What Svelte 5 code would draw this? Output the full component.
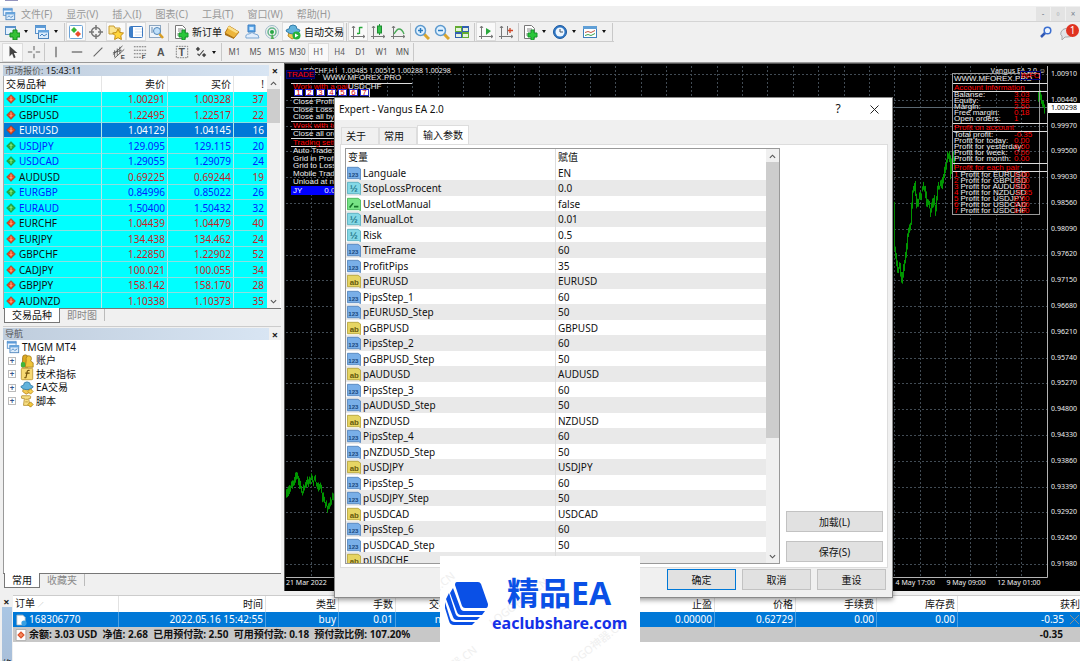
<script>
  const menus = ['文件(F)', '显示(V)', '插入(I)', '图表(C)', '工具(T)', '窗口(W)', '帮助(H)'];

  const tools = [
    { icon: 'newchart', caret: true }, { icon: 'profiles', caret: true }, { sep: true },
    { icon: 'market', on: true }, { icon: 'target' }, { icon: 'star', on: true },
    { icon: 'panel', on: true }, { icon: 'tester' }, { sep: true },
    { icon: 'order', label: '新订单' }, { icon: 'gold' }, { icon: 'cloud' }, { icon: 'signal' },
    { icon: 'auto', label: '自动交易', on: true }, { sep: true },
    { icon: 'bars', on: true }, { icon: 'candle' }, { icon: 'linechart' }, { sep: true },
    { icon: 'zoomin' }, { icon: 'zoomout' }, { icon: 'tile' }, { sep: true },
    { icon: 'scroll', on: true }, { icon: 'shift' }, { sep: true },
    { icon: 'indicator', caret: true }, { icon: 'clock', caret: true }, { icon: 'template', caret: true }, { sep: true }
  ];
  const drawTools = ['cursor', 'cross', 'vline', 'hline', 'trend', 'channel', 'fibo', 'textA', 'textT'];
  const frames = ['M1', 'M5', 'M15', 'M30', 'H1', 'H4', 'D1', 'W1', 'MN'];

  const quotes = [
    ['USDCHF', '1.00291', '1.00328', 37, 'd'], ['GBPUSD', '1.22495', '1.22517', 22, 'd'],
    ['EURUSD', '1.04129', '1.04145', 16, 'd', true], ['USDJPY', '129.095', '129.115', 20, 'u'],
    ['USDCAD', '1.29055', '1.29079', 24, 'u'], ['AUDUSD', '0.69225', '0.69244', 19, 'd'],
    ['EURGBP', '0.84996', '0.85022', 26, 'u'], ['EURAUD', '1.50400', '1.50432', 32, 'u'],
    ['EURCHF', '1.04439', '1.04479', 40, 'd'], ['EURJPY', '134.438', '134.462', 24, 'd'],
    ['GBPCHF', '1.22850', '1.22902', 52, 'd'], ['CADJPY', '100.021', '100.055', 34, 'd'],
    ['GBPJPY', '158.142', '158.170', 28, 'd'], ['AUDNZD', '1.10338', '1.10373', 35, 'd']
  ];
  const tree = [['accounts', '账户'], ['func', '技术指标'], ['expert', 'EA交易'], ['script', '脚本']];

  const params = [
    ['int', 'Languale', 'EN'], ['real', 'StopLossProcent', '0.0'], ['bool', 'UseLotManual', 'false'],
    ['real', 'ManualLot', '0.01'], ['real', 'Risk', '0.5'], ['int', 'TimeFrame', '60'], ['int', 'ProfitPips', '35']
  ];
  ['EURUSD', 'GBPUSD', 'AUDUSD', 'NZDUSD', 'USDJPY', 'USDCAD'].forEach((p, i) => {
    params.push(['str', 'p' + p, p], ['int', `PipsStep_${i + 1}`, '60'], ['int', `p${p}_Step`, '50']);
  });
  params.push(['str', 'pUSDCHF', 'USDCHF']);

  const prices = Array.from({ length: 20 }, (_, i) => (1.0091 - i * 0.0047).toFixed(5));
  const dates = ['21 Mar 2022', ...Array(11).fill(''), '4 May 17:00', '9 May 09:00', '12 May 01:00'];

  const stats = [['Balanse:', '3.03'], ['Equity:', '2.68'], ['Margin:', '2.50'], ['Free margin:', '0.18'], ['Open orders:', '1']];
  const profit = [['Total profit:', '-0.35'], ['Profit for today:', '0.00'], ['Profit for yesterday:', '0.00'], ['Profit for week:', '0.00'], ['Profit for month:', '0.00']];
  const pairs = [['EURUSD', '0.00'], ['GBPUSD', '0.00'], ['AUDUSD', '0.00'], ['NZDUSD', '-0.35'], ['USDJPY', '0.00'], ['USDCAD', '0.00'], ['USDCHF', '0.00']];

  // One vertical bar per pixel between the key points, with a repeatable jitter.
  function bars(points) {
    let d = '', seed = 7;
    const rnd = () => (seed = (seed * 16807) % 2147483647) / 2147483647;
    for (let k = 0; k < points.length - 1; k++) {
      const [x0, y0] = points[k], [x1, y1] = points[k + 1];
      for (let x = x0; x < x1; x++) {
        const a = y0 + ((y1 - y0) * (x - x0)) / (x1 - x0);
        const b = y0 + ((y1 - y0) * (x + 1 - x0)) / (x1 - x0);
        const shift = (rnd() - 0.5) * 5;
        const lo = Math.min(a, b) + shift - rnd() * 4, hi = Math.max(a, b) + shift + 1 + rnd() * 4;
        d += `M${x + 0.5} ${lo.toFixed(1)}V${hi.toFixed(1)}`;
      }
    }
    return d;
  }
  const leftBars = bars([[0, 432], [5, 419], [11, 408], [16, 425], [21, 417], [25, 411], [30, 416], [34, 420], [38, 435], [43, 441], [48, 430]]);
  const midBars = bars([[608, 142], [609, 185], [612, 203], [614, 198], [616, 212], [619, 196], [622, 170], [625, 155], [627, 125], [629, 120], [631, 137], [634, 130], [637, 124], [639, 120], [641, 134], [645, 146], [648, 132], [650, 143], [652, 122], [655, 120], [659, 105], [662, 88], [664, 92], [665, 108], [667, 85], [669, 100]]);
  const endBars = bars([[752, 36], [754, 28], [756, 34], [759, 42]]);
</script>

{#snippet icon(name)}
  <svg class="ic" viewBox="0 0 16 16" fill="none" aria-hidden="true">
    {#if name === 'app' || name === 'profiles' || name === 'account'}
      <rect x="1.500" y="1.500" width="10" height="8" fill="#eaf4ff" stroke="#5b93cb" />
      <path d="M1 2h11v2H1z" fill="#5b9bd8" />
      <rect x="4.500" y="6.500" width="10" height="8" fill="#dcecfb" stroke="#4c83bb" />
      <path d="M4 6h11v2.500H4z" fill="#66a4dd" /><path d="M6 12l2-2 2 2 3-2" stroke="#4684c4" />
    {:else if name === 'newchart'}
      <rect x="1.500" y="2.500" width="10" height="8" fill="#e4f1fd" stroke="#5c8fc2" /><path d="M1 2h11v2H1z" fill="#5b93cb" />
      <path d="M9 6h4v3h3v4h-3v3H9v-3H6V9h3z" fill="#35c135" stroke="#128a1c" />
    {:else if name === 'market'}
      <rect x="1.500" y="1.500" width="13" height="13" rx="1" fill="#fff" stroke="#6ba2d6" />
      <path d="M6 3l3 3-3 3-3-3z" fill="#35b535" /><path d="M10 7l3 3-3 3-3-3z" fill="#ed4b28" />
    {:else if name === 'target'}
      <circle cx="8" cy="8" r="4.500" stroke="#777" stroke-width="1.500" /><path d="M8 1v5M8 10v5M1 8h5M10 8h5" stroke="#777" stroke-width="1.500" />
    {:else if name === 'star'}
      <path d="M1 2h5l1 2h5v6H1z" fill="#fbe590" stroke="#c79b31" /><path d="M10 5l1.700 3.500 3.800.500-2.700 2.700.600 3.800-3.400-1.800-3.400 1.800.600-3.800L4.500 9l3.800-.500z" fill="#ffd53b" stroke="#c28b15" />
    {:else if name === 'panel'}
      <rect x="1.500" y="2.500" width="13" height="11" rx="1" fill="#fff" stroke="#3c78c0" /><path d="M2 3h3v10H2z" fill="#3d7fc9" /><path d="M7 5h7M7 8h7M7 11h7" stroke="#d4e3f5" />
    {:else if name === 'tester'}
      <rect x="1.500" y="1.500" width="11" height="12" fill="#edf4fb" stroke="#8ba5c0" /><path d="M4 3v6M7 4v6" stroke="#688cb1" /><circle cx="9" cy="7" r="3.500" fill="#bfe0fb" stroke="#5688b8" /><path d="M11.500 10l3.500 4" stroke="#d99e23" stroke-width="2.500" />
    {:else if name === 'order' || name === 'indicator'}
      <path d="M2.500 1.500h7l3 3v10h-10z" fill="#fff" stroke="#777" /><path d="M5 5h5M5 7h4M5 9v3" stroke="#888" />
      <path d="M9 6h3v3h3v4h-3v3H9v-3H6V9h3z" fill="#29c739" stroke="#15952b" />
    {:else if name === 'gold'}
      <path d="M5 2l10 6-5 6L1 9z" fill="#edb53b" stroke="#b87a17" /><path d="M5 2l10 6-3 1-9-5z" fill="#fbdf88" /><path d="M1 9l9 5v1L1 11z" fill="#a86e12" />
    {:else if name === 'cloud'}
      <path d="M4 1h7v7H4z" fill="#5ea8e8" stroke="#3b7cc0" /><path d="M5.500 3h4v3h-4z" fill="#cfe8ff" /><path d="M2 14q-1-4 3-4 3-3 6 0 4 0 4 4z" fill="#e2eefc" stroke="#7ba7d3" />
    {:else if name === 'signal'}
      <circle cx="8" cy="8" r="6.500" stroke="#9ebac9" /><circle cx="8" cy="8" r="4" stroke="#64b58b" stroke-width="1.500" /><circle cx="8" cy="8" r="2" fill="#28a745" /><path d="M8 9l2 6H7z" fill="#50af52" />
    {:else if name === 'auto' || name === 'expert'}
      <path d="M4 8l8-1 1 5-6 3-4-3z" fill="#f3c851" stroke="#bd8d27" /><path d="M1 7q0-2 3-2 0-4 4-4t4 4q3 0 3 2-3 3-7 3T1 7z" fill="#62b3dc" stroke="#347da9" />
      {#if name === 'auto'}<circle cx="11.500" cy="11.500" r="4" fill="#26b23b" /><path d="M10 9.500v4l3.500-2z" fill="#fff" />{:else}<path d="M12 9l3 3-3 3-3-3z" fill="#f7d152" stroke="#bb8e1f" />{/if}
    {:else if name === 'bars'}
      <path d="M3.500 2v13M1 12.500h14M2 4l1.500-2L5 4M13 11l2 1.500-2 1.500" stroke="#777" /><path d="M9.500 3v7M9.500 3.500h3M7 9.500h2" stroke="#27a73a" stroke-width="1.300" />
    {:else if name === 'candle'}
      <path d="M3.500 2v13M1 12.500h14M2 4l1.500-2L5 4M13 11l2 1.500-2 1.500" stroke="#777" /><path d="M9.500 0v11" stroke="#27953a" /><rect x="7.500" y="2" width="4" height="7" fill="#35c24a" stroke="#1c8b31" />
    {:else if name === 'linechart'}
      <path d="M3.500 2v13M1 12.500h14M2 4l1.500-2L5 4M13 11l2 1.500-2 1.500" stroke="#777" /><path d="M4 10q3-5 5-5 3 0 5 5" stroke="#48a956" stroke-width="1.300" />
    {:else if name === 'zoomin' || name === 'zoomout'}
      <path d="M10 10l5 5" stroke="#dba52c" stroke-width="3" /><circle cx="6.500" cy="6.500" r="5" fill="#dff1ff" stroke="#5d9ace" stroke-width="1.500" /><path d="M4 6.500h5" stroke="#2879bd" stroke-width="1.500" />
      {#if name === 'zoomin'}<path d="M6.500 4v5" stroke="#2879bd" stroke-width="1.500" />{/if}
    {:else if name === 'tile'}
      <path d="M1 2h7v6H1zM8 8h7v6H8z" fill="#63ac32" /><path d="M8 2h7v6H8zM1 8h7v6H1z" fill="#315fb2" /><path d="M2 4h5v3H2zM9 4h5v3H9zM2 10h5v3H2zM9 10h5v3H9z" fill="#e4f2dd" />
    {:else if name === 'scroll'}
      <path d="M3.500 2v13M1 12.500h14M2 4l1.500-2L5 4M13 11l2 1.500-2 1.500" stroke="#777" /><path d="M8 4l5 3-5 4z" fill="#2aa83c" />
    {:else if name === 'shift'}
      <path d="M3.500 2v13M1 12.500h14M2 4l1.500-2L5 4M13 11l2 1.500-2 1.500M9.500 2v9" stroke="#777" /><path d="M10 6.500h5M12 4v5" stroke="#d14626" stroke-width="1.300" />
    {:else if name === 'clock'}
      <circle cx="8" cy="8" r="6.500" fill="#2f78c7" stroke="#1f5a9e" /><circle cx="8" cy="8" r="4.500" fill="#edf6ff" /><path d="M8 5v3h3" stroke="#456" />
    {:else if name === 'template'}
      <rect x="1.500" y="2.500" width="13" height="11" fill="#fff" stroke="#3f7fbd" /><path d="M1 2h14v3H1z" fill="#609fd6" /><path d="M3 8.500l3-1 3 1 4-2" stroke="#c4543f" /><path d="M3 11.500l3-1 3 1 4-2" stroke="#3da24c" />
    {:else if name === 'cursor'}
      <path d="M4 1v12l3-3 2 5 2-1-2-5h4z" fill="#444" />
    {:else if name === 'cross'}
      <path d="M8 1v5M8 10v5M1 8h5M10 8h5" stroke="#666" stroke-width="1.200" />
    {:else if name === 'vline'}<path d="M8 2v12" stroke="#555" stroke-width="1.300" />
    {:else if name === 'hline'}<path d="M2 8h12" stroke="#555" stroke-width="1.300" />
    {:else if name === 'trend'}<path d="M3 13L13 3" stroke="#666" stroke-width="1.200" />
    {:else if name === 'channel'}
      <path d="M1 11L12 1M3 15L14 5M3 6v8M6 4v8M9 2v8M1 9l10-3" stroke="#555" /><text x="10" y="16" class="mini">E</text>
    {:else if name === 'fibo'}
      <path d="M1 2h14M1 6h14M1 10h14M1 14h8" stroke="#666" stroke-dasharray="2 1" /><text x="10" y="16" class="mini">F</text>
    {:else if name === 'textA'}<text x="3.500" y="13" class="glyph">A</text>
    {:else if name === 'textT'}
      <rect x="1.500" y="1.500" width="13" height="13" stroke="#777" stroke-dasharray="2 1" /><text x="4" y="12.500" class="glyph">T</text>
    {:else if name === 'arrows'}
      <path d="M4.500 2l2.500 2.500L4.500 7 2 4.500z" fill="#444" /><path d="M4 10l2 2 5-6" stroke="#444" stroke-width="1.300" /><path d="M11.500 9l2.500 2.500-2.500 2.500L9 11.500z" fill="#444" />
    {:else if name === 'accounts'}
      <path d="M3 4q0-3 3-3t3 3q0 2-1 3l1 8H2l1-8z" fill="#dda920" stroke="#9d7413" /><path d="M7 5q0-3 3-3t3 3q0 2-1 3l3 2v5H6l1-7z" fill="#f0c53b" stroke="#a9801c" /><rect x="1" y="9" width="5" height="6" rx="2" fill="#40b53c" />
    {:else if name === 'func'}
      <rect x="1.500" y="1.500" width="13" height="13" rx="1" fill="#f7d973" stroke="#c19a36" /><path d="M11 4q-3-1-3 3l-1 4q0 2-2 1M6 7h5" stroke="#70500a" stroke-width="1.300" />
    {:else if name === 'script'}
      <path d="M2 2h9q2 0 1 3h-2l1 8H4L5 5H2q-1-2 0-3z" fill="#f8df83" stroke="#b8953c" /><path d="M12 9l3 3-3 3-3-3z" fill="#f4c93b" stroke="#ac851d" /><path d="M6 6h3M6 9h3" stroke="#b8953c" />
    {:else if name === 'u' || name === 'd'}
      <path d="M8 1l7 7-7 7-7-7z" fill={name === 'u' ? '#2cad3b' : '#e8471f'} stroke={name === 'u' ? '#16792a' : '#93341b'} />
      <path d={name === 'u' ? 'M8 4l3 4H9v4H7V8H5z' : 'M8 12L5 8h2V4h2v4h2z'} fill={name === 'u' ? '#7be27a' : '#ff9b6e'} />
    {:else if name === 'trade'}
      <path d="M2.500 1.500h8l3 3v10h-11z" fill="#fff" stroke="#bbb" /><circle cx="12" cy="12" r="3.500" fill="#38a0e3" />
    {:else if name === 'balance'}
      <rect x="1.500" y=".5" width="13" height="15" rx="1" fill="#fff" stroke="#999" /><path d="M8 3l5 5-5 5-5-5z" fill="#dc4820" /><path d="M8 5v6M5 8h6" stroke="#ffb98d" />
    {:else}
      <path d="M.5 1.500h12l3 2v12l-2-1H.5z" fill={name === 'int' ? '#79afe8' : name === 'real' ? '#85d8e6' : name === 'bool' ? '#77e386' : '#e6d563'} stroke={name === 'int' ? '#5385bd' : name === 'real' ? '#57afbf' : name === 'bool' ? '#43b355' : '#b6a43b'} />
      {#if name === 'bool'}<path d="M3 12l4-5M8 11h5" stroke="#157329" stroke-width="1.800" />
      {:else}<text x={name === 'int' ? 1.5 : 3} y="12" class={['type', name]}>{name === 'int' ? '123' : name === 'real' ? '½' : 'ab'}</text>{/if}
    {/if}
  </svg>
{/snippet}

{#snippet chevron(down)}
  <svg class="chev" viewBox="0 0 8 8" fill="none" aria-hidden="true"><path d={down ? 'M1 2.500l3 3 3-3' : 'M1 5.500l3-3 3 3'} stroke="#555" stroke-width="1.300" /></svg>
{/snippet}

<div class="app">
  <div class="edge"><i></i></div>
  <header class="menubar">
    {@render icon('app')}
    <nav>{#each menus as m}<button>{m}</button>{/each}</nav>
    <div class="winbtns"><button aria-label="-">-</button><button aria-label="▫">▫</button><button aria-label="×">×</button></div>
  </header>

  <div class="toolbar">
    <div class="strip main">
      {#each tools as t}
        {#if t.sep}<i class="sep"></i>
        {:else}
          <button class={['tb', { on: t.on, caret: t.caret }]} aria-label={t.label ?? t.icon}>
            {@render icon(t.icon)}{#if t.label}<span>{t.label}</span>{/if}
          </button>
        {/if}
      {/each}
    </div>
    <div class="right">
      <svg width="12" height="12" viewBox="0 0 12 12" fill="none"><path d="M1 11l4-4" stroke="#3157b4" stroke-width="2.500" /><circle cx="7.500" cy="4.500" r="3.300" fill="#eef5ff" stroke="#3c6fd0" stroke-width="1.500" /></svg>
      <span class="chat">
        <svg width="14" height="12" viewBox="0 0 14 12"><path d="M7 0q6 0 6 4.500T7 9H5l-3 3V8Q0 7 1 4t6-4z" fill="#e3e3e6" stroke="#aaa" /></svg>
        <b>1</b>
      </span>
    </div>
  </div>
  <div class="toolbar second">
    <div class="strip">
      {#each drawTools as d, i}<button class={['tb', { on: i === 0 }]} aria-label={d}>{@render icon(d)}</button>{#if i === 1}<i class="sep"></i>{/if}{/each}
      <button class="tb caret" aria-label="arrows">{@render icon('arrows')}</button><i class="sep wide"></i>
      {#each frames as f}<button class={['tf', { on: f === 'H1' }]}>{f}</button>{/each}<i class="sep"></i>
    </div>
  </div>

  <main class="work">
    <aside class="side">
      <section class="panel">
        <h2><span>市场报价: <b>15:43:11</b></span><button class="x" aria-label="×">×</button></h2>
        <div class="scrollbox">
          <table class="quotes">
            <thead><tr><th>交易品种</th><th>卖价</th><th>买价</th><th>!</th></tr></thead>
            <tbody>
              {#each quotes as [s, bid, ask, sp, dir, sel]}
                <tr class={[dir, { sel }]}><td><div class="cell">{@render icon(dir)}{s}</div></td><td>{bid}</td><td>{ask}</td><td>{sp}</td></tr>
              {/each}
            </tbody>
          </table>
          <div class="sbar">{@render chevron(false)}<i class="thumb q"></i>{@render chevron(true)}</div>
        </div>
        <div class="tabs"><button class="cur">交易品种</button><button>即时图</button></div>
      </section>
      <section class="panel nav">
        <h2><span>导航</span><button class="x" aria-label="×">×</button></h2>
        <ul class="tree">
          <li class="root">{@render icon('account')}TMGM MT4</li>
          {#each tree as [ic, label]}<li><i class="plus">+</i>{@render icon(ic)}{label}</li>{/each}
        </ul>
        <div class="tabs"><button class="cur">常用</button><button>收藏夹</button></div>
      </section>
    </aside>

    <section class="chart">
      <div class="plot">
        <svg class="canvas" viewBox="0 0 762 512" preserveAspectRatio="none" fill="none">
          <g stroke="#414b54" stroke-dasharray="2 2">
            {#each Array(29) as _, i}<path d="M{Math.round(26 + i * 25.36) - 0.5} 0V512" />{/each}
            {#each prices as _, i}<path d="M0 {Math.round(8 + i * 25.79) + 0.5}H762" />{/each}
          </g>
          <path d="M0 41.500H762" stroke="#5b6872" />
          <path d="{leftBars}{midBars}{endBars}" stroke="#009600" />
          <path d="M0 511.500H761.500V0" stroke="#b4b4b4" />
        </svg>
        <div class="ohlc"><i></i>USDCHF,H1&nbsp; 1.00485 1.00515 1.00288 1.00298</div>
        <div class="eaname">Vangus EA 2.0 ☺</div>
        <div class="trade">
          <span class="tag">TRADE</span>
          <p class="site">WWW.MFOREX.PRO</p>
          <p class="rd with">Work with a pair<em>USDCHF</em></p>
          <div class="nums">{#each [1, 2, 3, 4, 5, 6, 7] as n}<button>{n}</button>{/each}</div>
          <div class="grp"><p>Close Profit</p><p>Close Loss:</p><p>Close all by</p></div>
          <p class="rd">Work with total</p>
          <p class="one">Close all orders</p>
          <p class="rd">Trading settings</p>
          <div class="grp"><p>Auto Trade:</p><p>Grid in Profit</p><p>Grid to Loss</p><p>Mobile Trade</p><p>Unload at night</p></div>
          <p class="bar"><span>JY</span><span>0.00</span></p>
        </div>
        <div class="info">
          <span class="tag">INFO</span>
          <p class="site">WWW.MFOREX.PRO</p>
          <p class="rd">Account information</p>
          <div class="grp">{#each stats as [k, v]}<p>{k}<em>{v}</em></p>{/each}</div>
          <p class="rd">Profit on account</p>
          <div class="grp">{#each profit as [k, v]}<p>{k}<em>{v}</em></p>{/each}</div>
          <p class="rd">Profit for each pair</p>
          <div class="grp last">{#each pairs as [k, v], i}<p><b>{i + 1}</b>Profit for {k}<em>{v}</em></p>{/each}</div>
        </div>
      </div>
      <div class="prices">{#each prices as p}<span>{p}</span>{/each}<b class="now">1.00298</b></div>
      <div class="dates">{#each dates as d}<span>{d}</span>{/each}</div>
    </section>

    <section class="dialog" role="dialog" aria-label="Expert - Vangus EA 2.0">
      <div class="title"><span>Expert - Vangus EA 2.0</span><button aria-label="?">?</button>
        <button aria-label="×"><svg width="9" height="9" viewBox="0 0 9 9"><path d="M.5.500l8 8M8.500.500l-8 8" stroke="#222" /></svg></button></div>
      <div class="dtabs"><button>关于</button><button>常用</button><button class="cur">输入参数</button></div>
      <div class="page">
        <div class="listbox">
          <table class="params">
            <thead><tr><th>变量</th><th>赋值</th></tr></thead>
            <tbody>
              {#each params as [t, n, v]}
                <tr><td><div class="cell">{@render icon(t)}{n}</div></td><td>{v}</td></tr>
              {/each}
            </tbody>
          </table>
          <div class="sbar">{@render chevron(false)}<i class="thumb p"></i>{@render chevron(true)}</div>
        </div>
        <div class="sidebtns"><button class="btn">加载(L)</button><button class="btn">保存(S)</button></div>
      </div>
      <div class="actions"><button class="btn def">确定</button><button class="btn">取消</button><button class="btn">重设</button></div>
    </section>
  </main>

  <footer class="terminal">
    <div class="rail"><button class="x" aria-label="×">×</button><div><span>终端</span></div></div>
    <table class="orders">
      <colgroup><col class="c106" /><col class="c147" /><col class="c73" /><col class="c57" /><col class="c76" /><col class="c81" /><col class="c81" /><col class="c81" /><col class="c81" /><col class="c81" /><col class="c81" /><col /></colgroup>
      <thead><tr><th>订单 <small>∕</small></th><th>时间</th><th>类型</th><th>手数</th><th>交易品种</th><th></th><th></th><th>止盈</th><th>价格</th><th>手续费</th><th>库存费</th><th>获利</th></tr></thead>
      <tbody>
        <tr class="sel"><td><div class="cell">{@render icon('trade')}168306770</div></td><td>2022.05.16 15:42:55</td><td>buy</td><td>0.01</td><td>nzdusd</td><td></td><td></td><td>0.00000</td><td>0.62729</td><td>0.00</td><td>0.00</td>
          <td><div class="cell end">-0.35<svg width="11" height="11" viewBox="0 0 11 11"><path d="M1 1l9 9M10 1l-9 9" stroke="#8d8f91" /></svg></div></td></tr>
        <tr class="sum"><td colspan="11"><div class="cell">{@render icon('balance')}<span>余额: 3.03 USD&nbsp; 净值: 2.68&nbsp; 已用预付款: 2.50&nbsp; 可用预付款: 0.18&nbsp; 预付款比例: 107.20%</span></div></td><td class="tot">-0.35</td></tr>
      </tbody>
    </table>
  </footer>

  <div class="brand">
    <span class="wm a">LOGO神器.CN</span><span class="wm b">LOGO神器.CN</span><span class="wm c">LOGO神器.CN</span><span class="wm d">LOGO神器.CN</span>
    <svg width="44" height="44" viewBox="0 0 44 44" fill="#0a50e6">
      <path d="M12 1h21q2 0 3 2l7 20q0 4-2 4H20q-2 0-3-2L10 4q0-3 2-3z" />
      <path d="M8 7l7 19q1 4 4 4h21l-3 4H16q-3 0-4-3L5 12z" />
      <path d="M4 12l6 19q1 5 5 5h20l-3 3H12q-3 0-4-3L1 18z" />
      <path d="M0 21l5 16q1 4 5 4h20l-3 3H9q-4 0-5-4L0 27z" />
    </svg>
    <div class="words"><strong>精品EA</strong><span>eaclubshare.com</span></div>
  </div>
</div>

<style>
  :global(body) { margin: 0; background: #fff; }
  .app { position: relative; height: 100vh; overflow: hidden; display: flex; flex-direction: column; background: #f0f0f0; color: #111; font: 10px/14px "Noto Sans", "Noto Sans CJK SC", sans-serif; }
  .app, .app * { box-sizing: border-box; }
  button { font: inherit; color: inherit; background: none; border: 0; padding: 0; margin: 0; }
  p, h2, ul { margin: 0; padding: 0; }
  table { border-collapse: separate; border-spacing: 0; table-layout: fixed; }
  th, td { padding: 0; font-weight: 400; overflow: hidden; white-space: nowrap; }
  .ic { width: 14px; height: 14px; flex: none; }
  .mini { font: bold 7px "Liberation Sans", sans-serif; fill: #444; }
  .glyph { font: bold 12px "Liberation Sans", sans-serif; fill: #555; }
  .type { font: bold 7px "Liberation Sans", sans-serif; fill: #1b4a80; }
  .type.real { font-size: 11px; fill: #23798a; }
  .type.str { font-size: 9px; fill: #665a0d; }

  .edge { height: 6px; flex: none; background: #fff; padding-left: 5px; }
  .edge i { display: block; width: 13px; height: 1px; background: #9393bd; }
  .menubar { flex: none; height: 16px; display: flex; align-items: center; padding-left: 2px; border-bottom: 1px solid #d4d4d4; color: #999; }
  .menubar nav { display: flex; gap: 14px; padding-left: 5px; flex: 1; }
  .winbtns { display: flex; gap: 1px; }
  .winbtns button { width: 14px; height: 14px; background: #e3e3e3; color: #788490; font-size: 8px; line-height: 12px; }

  .toolbar { flex: none; height: 20px; display: flex; justify-content: space-between; }
  .second { height: 21px; border-bottom: 1px solid #999; }
  .strip { display: flex; align-items: center; padding-left: 2px; }
  .main { border-bottom: 1px solid #ccc; }
  .tb { height: 19px; width: 21px; display: flex; align-items: center; justify-content: center; gap: 3px; flex: none; }
  .main .tb { width: 20px; }
  .main .ic { width: 16px; height: 16px; }
  .main .tb:has(span) { width: auto; padding-left: 3px; }
  .tb.on, .tf.on { background: #f9f9f9; box-shadow: inset 0 0 0 1px #dcdcdc; }
  .main .tb.caret, .tb.caret { width: 30px; justify-content: flex-start; padding-left: 2px; gap: 4px; }
  .second .tb.caret { width: 28px; }
  .tb.caret::after { content: ''; border: 2px solid transparent; border-top: 3px solid #111; border-bottom: 0; }
  .sep { width: 1px; height: 18px; margin: 0 1px 0 2px; background: #c8c8c8; flex: none; }
  .second .sep { margin: 0; }
  .second .wide { margin: 0 2px 0 1px; }
  .tf { width: 21px; height: 19px; font-size: 8px; color: #555; text-align: center; }
  .right { display: flex; align-items: center; gap: 8px; }
  .chat { position: relative; width: 20px; height: 16px; display: flex; align-items: flex-end; }
  .chat b { position: absolute; left: 6px; top: 0; width: 13px; height: 13px; border-radius: 50%; background: #df3220; color: #fff; font: 10px/13px "Noto Sans", sans-serif; text-align: center; }

  .work { position: relative; flex: 1; min-height: 0; display: flex; }
  .side { width: 284px; flex: none; display: flex; flex-direction: column; padding: 2px 3px 3px; gap: 3px; }
  .panel { display: flex; flex-direction: column; }
  .panel.nav { flex: 1; border-top: 1px solid #ccc; padding-top: 1px; }
  h2 { display: flex; height: 11px; font: 9px/11px "Noto Sans", "Noto Sans CJK SC", sans-serif; color: #555; }
  .nav h2 { height: 12px; }
  h2 span { flex: 1; background: linear-gradient(90deg, #bfcddd, #d8e5f3); padding-left: 2px; }
  h2 b { font-weight: 400; color: #111; }
  .x { width: 12px; font: bold 11px/11px "Noto Sans", sans-serif; color: #222; text-align: center; }
  .scrollbox { display: flex; height: 232px; overflow: hidden; border-left: 1px solid #aaa; background: #fff; }
  .quotes { width: 263px; }
  .quotes th, .quotes td { border-right: 1px solid #b5e6e6; text-align: right; padding-right: 2px; line-height: 14px; }
  .quotes th { height: 16px; border-color: #e5e5e5; }
  .quotes td { background: #0ff; border-bottom: 1px solid #8edede; height: 16px; color: #c81e28; }
  .quotes tr:nth-child(odd) td { height: 15px; }
  .quotes tr:nth-child(odd) .cell, .params tr:nth-child(odd) .cell { height: 14px; }
  .quotes tr > :first-child { text-align: left; width: 98px; padding-left: 2px; color: #111; }
  .quotes tr > :nth-child(2), .quotes tr > :nth-child(3) { width: 66px; }
  .quotes tr > :last-child { border-right: 0; padding-right: 3px; }
  .quotes .u td { color: #0025ff; }
  .quotes .sel td, .quotes .sel td:first-child { background: #0078d7; color: #fff; }
  .quotes .ic { width: 10px; height: 10px; }
  .cell { display: flex; align-items: center; gap: 3px; height: 15px; }
  .quotes .cell { line-height: 14px; }
  .sbar { width: 13px; background: #f0f0f0; display: flex; flex-direction: column; align-items: center; flex: none; padding: 4px 0 3px; }
  .thumb { width: 100%; background: #cdcdcd; margin: 2px 0 auto; }
  .thumb.q { height: 34px; }
  .thumb.p { height: 276px; }
  .chev { width: 7px; height: 7px; }
  .tabs { display: flex; height: 15px; border-top: 1px solid #777; }
  .tabs button { padding: 0 7px; color: #888; line-height: 13px; border-right: 1px solid #bbb; height: 12px; }
  .tabs .cur { height: 15px; background: #fff; color: #111; border: 1px solid #777; border-top: 0; margin: -1px 0 0 1px; padding: 0 7px; }
  .tree { flex: 1; background: #fff; border-left: 1px solid #999; list-style: none; padding-left: 1px; line-height: 13px; }
  .tree li { display: flex; align-items: center; height: 14px; gap: 2px; }
  .tree li:nth-child(even) { height: 13px; }
  .tree .root { padding-left: 1px; }
  .plus { width: 8px; height: 8px; margin: 0 2px 0 3px; border: 1px solid #bbb; color: #35558e; font: bold 8px/6px "Noto Sans", sans-serif; text-align: center; }

  .chart { flex: 1; min-width: 0; display: grid; grid-template: 1fr 13px / 1fr 32px; background: #000; color: #eee; border: solid #555; border-width: 1px 0 0 1px; padding: 2px 0 0 1px; font: 7px/10px "Noto Sans", sans-serif; }
  .plot { position: relative; min-height: 0; }
  .canvas { position: absolute; width: 100%; height: 100%; }
  .prices { position: relative; display: flex; flex-direction: column; justify-content: space-between; padding: 3px 0 9px 3px; }
  .now { position: absolute; left: 0; right: 0; top: 37px; background: #fff; color: #000; font-weight: 400; padding-left: 3px; }
  .dates { grid-column: 1; display: grid; grid-template-columns: repeat(15, 1fr); white-space: nowrap; }
  .ohlc { position: absolute; left: 1px; top: 0; display: flex; align-items: center; gap: 7px; }
  .ohlc i { border: 3px solid transparent; border-top-color: #fff; border-bottom: 0; }
  .eaname { position: absolute; right: 2px; top: 0; }
  .trade, .info { position: absolute; font: 8px/8px "Liberation Sans", Arial, sans-serif; white-space: nowrap; color: #eee; }
  .trade { left: 5px; top: 6px; width: 121px; }
  .info { right: 8px; top: 7px; width: 88px; border: 1px solid #999; }
  .tag { position: absolute; color: #f00; border: 1px solid #00007a; line-height: 7px; z-index: 1; }
  .trade .tag { left: -5px; top: -2px; background: #00003c; }
  .info .tag { right: -2px; top: -3px; }
  .rd { color: #f00; border: solid #ddd; border-width: 1px 0; height: 9px; padding-left: 2px; line-height: 7px; }
  .trade p { padding-left: 2px; }
  .trade .site { padding-left: 32px; line-height: 11px; height: 12px; border-bottom: 1px solid #ddd; }
  .trade .with { border: 0; height: 5px; line-height: 5px; }
  .trade .with em { position: absolute; left: 57px; color: #eee; }
  em { font-style: normal; }
  .nums { display: flex; gap: 2px; padding: 0 0 1px 3px; height: 9px; width: 79px; border: solid #ddd; border-width: 0 1px 1px 0; }
  .nums button { width: 9px; height: 7px; background: #fff; border: 1px solid #22c; color: #e00000; line-height: 5px; flex: none; }
  .trade .grp { line-height: 8px; }
  .trade .grp p { height: 8px; }
  .trade .grp p:nth-child(2) { height: 7px; }
  .trade .one { height: 8px; }
  .trade .bar { background: #00f; color: #fff; height: 9px; display: flex; gap: 22px; line-height: 9px; }
  .info .site { line-height: 9px; height: 9px; padding-left: 1px; }
  .info .rd { width: 94px; padding-left: 1px; }
  .info .grp { padding: 0 0 1px 1px; }
  .info .grp.last { padding-bottom: 0; }
  .info .grp p { position: relative; height: 6px; line-height: 6px; }
  .info .grp em { position: absolute; left: 60px; color: #f00; }
  .info .grp b { color: #f00; font-weight: 400; padding-right: 2px; }

  .dialog { position: absolute; z-index: 2; left: 334px; top: 34px; width: 559px; background: #f0f0f0; border: 1px solid #8a8a8a; box-shadow: 0 2px 5px #0006; padding: 0 4px 7px 5px; }
  .title { display: flex; align-items: center; height: 22px; background: #fff; margin: 0 -4px 5px -5px; padding-left: 4px; }
  .title span { flex: 1; }
  .title button { width: 36px; display: flex; justify-content: center; font-size: 12px; }
  .dtabs { display: flex; align-items: flex-end; height: 19px; padding-left: 1px; }
  .dtabs button { height: 17px; width: 38px; border: 1px solid #ddd; border-bottom: 0; padding-right: 8px; background: #f0f0f0; }
  .dtabs .cur { height: 19px; width: 52px; background: #fff; padding: 0; }
  .page { display: flex; justify-content: space-between; background: #fff; border: 1px solid #ddd; padding: 3px 4px; }
  .listbox { display: flex; width: 435px; height: 416px; overflow: hidden; border: 1px solid #999; }
  .params { flex: 1; align-self: flex-start; }
  .params th { text-align: left; height: 16px; padding-left: 2px; }
  .params td { height: 16px; line-height: 14px; padding-left: 2px; }
  .params td:first-child { padding-left: 1px; }
  .params .cell { gap: 2px; }
  .params tbody tr:nth-child(odd) td { height: 15px; }
  .params tbody tr:nth-child(even) td { background: #e9e9e9; }
  .params tr > :first-child { width: 210px; border-right: 1px solid #ddd; }
  .sidebtns { display: flex; flex-direction: column; justify-content: flex-end; gap: 9px; width: 97px; padding-bottom: 2px; }
  .btn { height: 21px; background: #e1e1e1; border: 1px solid #c2c2c2; }
  .actions { display: flex; justify-content: flex-end; gap: 6px; padding: 1px 2px 0; }
  .actions .btn { width: 69px; }
  .actions .def { border-color: #0078d7; }

  .terminal { flex: none; height: 70px; display: flex; background: #fff; border-top: 4px solid #f0f0f0; }
  .rail { width: 13px; flex: none; display: flex; flex-direction: column; align-items: center; background: #f0f0f0; padding-top: 1px; }
  .rail div { position: relative; width: 10px; flex: 1; background: linear-gradient(#a9c6e4, #a9bfd9); }
  .rail span { position: absolute; bottom: -16px; left: 0; writing-mode: vertical-rl; font-size: 9px; line-height: 10px; }
  .orders { flex: 1; width: 100%; align-self: flex-start; border-top: 1px solid #ccc; }
  .orders th, .orders td { text-align: right; padding-right: 2px; height: 15px; line-height: 15px; border-right: 1px solid #e2e2e2; }
  .orders th { height: 14px; line-height: 14px; }
  .orders tr > :first-child { text-align: left; padding-left: 2px; }
  .orders th:last-child, .orders td:last-child { border-right: 0; padding-right: 0; }
  .orders td:first-child .ic { width: 12px; height: 12px; }
  .orders small { font-size: 6px; color: #999; }
  .orders .sel td { background: #0078d7; color: #fff; border-color: #4ba0e3; }
  .orders .sum td { background: #c8c8c8; font-weight: 700; border: 0; }
  .orders .sum td.tot { padding-right: 17px; }
  .orders .cell { gap: 2px; }
  .orders .end { justify-content: flex-end; gap: 5px; }
  .c106 { width: 106px; } .c147 { width: 147px; } .c73 { width: 73px; } .c57 { width: 57px; } .c76 { width: 76px; } .c81 { width: 81px; }

  .brand { position: absolute; z-index: 3; left: 440px; top: 556px; width: 200px; height: 105px; background: #fff; overflow: hidden; display: flex; gap: 3px; padding: 25px 0 0 5px; color: #0a50e6; }
  .words { position: relative; display: flex; flex-direction: column; margin-top: -7px; }
  .words strong { font: bold 32px/38px "Noto Sans", "Noto Sans CJK SC", sans-serif; padding-left: 15px; }
  .words span { font: bold 16px/22px "Noto Sans", sans-serif; color: #1430e8; }
  .wm { position: absolute; color: #efefef; font: 11px/12px "Noto Sans", "Noto Sans CJK SC", sans-serif; transform: rotate(-38deg); white-space: nowrap; }
  .a { left: -50px; top: 34px; }
  .b { left: 43px; top: 40px; }
  .c { left: -28px; top: 108px; }
  .d { left: 120px; top: 82px; }
</style>
